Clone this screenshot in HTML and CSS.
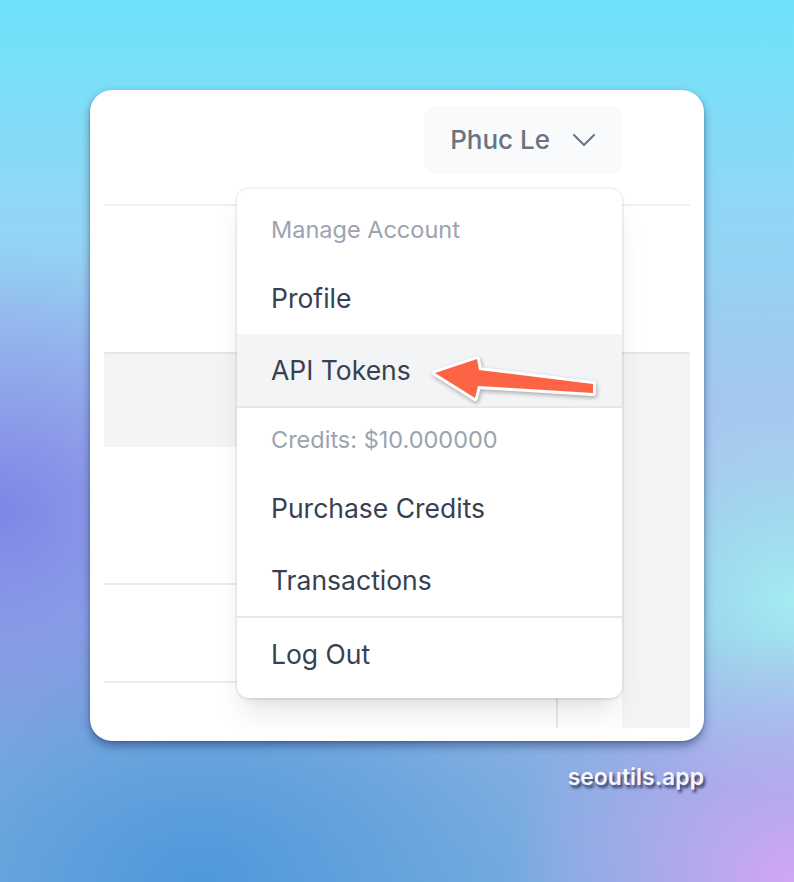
FILE: index.html
```html
<!doctype html>
<html>
 <head>
	<meta charset="UTF-8">
	<title>Account menu</title>
	<link rel="stylesheet" href="styles.css">
 </head>
 <body>
	<div class="stage">
		<div class="window">
			<div class="app">
				<nav class="topbar">
					<button class="user_btn" type="button">
						Phuc Le
						<svg class="chevron" viewBox="0 0 24 24" fill="none" stroke="currentColor" stroke-width="1.5">
							<path stroke-linecap="round" stroke-linejoin="round" d="m19.5 8.25-7.5 7.5-7.5-7.5"/>
						</svg>
					</button>
				</nav>
				<header class="page_head"></header>
				<main class="page_main">
					<div class="table_card">
						<div class="row row_first"></div>
						<div class="row"></div>
						<div class="row_last"><div class="col_line"></div></div>
					</div>
				</main>
			</div>

			<!-- 下拉菜单 -->
			<div class="dropdown">
				<div class="menu_head">Manage Account</div>
				<a class="menu_link">Profile</a>
				<a class="menu_link active">API Tokens</a>
				<div class="menu_sep"></div>
				<div class="menu_head">Credits: $10.000000</div>
				<a class="menu_link">Purchase Credits</a>
				<a class="menu_link">Transactions</a>
				<div class="menu_sep"></div>
				<a class="menu_link">Log Out</a>
			</div>

			<!-- 标注箭头 -->
			<svg class="arrow" viewBox="0 0 185 60" width="185" height="60">
				<polygon points="15,26 57,12 59,23 173,37 173,46 58,39 55,51"
					fill="#fd6446" stroke="#fff" stroke-width="6"
					stroke-linejoin="round" paint-order="stroke"/>
			</svg>
		</div>
		<div class="credit">seoutils.app</div>
	</div>
 </body>
</html>
```

FILE: styles.css
```css
html,body{margin:0;height:100%}
body{
	width:794px;height:882px;overflow:hidden;
	font-family:Inter,"Noto Sans",sans-serif;
	background:
		radial-gradient(ellipse 50% 38% at 0% 58%, #7f86e6 0%, rgba(127,134,230,0) 80%),
		radial-gradient(ellipse 45% 35% at 100% 100%, #d2a6f3 0%, rgba(210,166,243,0) 80%),
		radial-gradient(ellipse 40% 30% at 100% 68%, #a4ecf2 0%, rgba(164,236,242,0) 75%),
		radial-gradient(ellipse 60% 40% at 25% 100%, #4e98da 0%, rgba(78,152,218,0) 80%),
		linear-gradient(180deg,#6de3fa 0%,#8fd8f5 22%,#a8c4ee 50%,#8fb0e4 75%,#7aaee0 100%);
}

.stage{padding:90px 0 0 90px;width:614px}

/* 截图窗口 */
.window{
	position:relative;
	width:586px;height:638px;
	padding:0 14px 13px;
	background:#fff;
	border-radius:22px;
	box-shadow:0 5px 10px rgba(20,40,90,.45),0 1px 3px rgba(0,0,0,.2);
}
.app{height:638px;display:flex;flex-direction:column;overflow:hidden}

.topbar{
	height:98px;
	padding:16px 68px 0 0;
	display:flex;justify-content:flex-end;align-items:flex-start;
	border-bottom:2px solid #f1f2f4;
	flex-shrink:0;
}
.user_btn{
	display:flex;align-items:center;
	padding:16px 24px;
	border:2px solid transparent;
	border-radius:12px;
	background:#f9fafb;
	color:#6b7280;
	font-family:inherit;font-size:26px;font-weight:500;line-height:32px;
}
.chevron{width:32px;height:32px;margin:0 -4px 0 18px}

.page_head{
	height:146px;flex-shrink:0;
	background:#fff;
	box-shadow:0 1px 3px rgba(0,0,0,.1);
	position:relative;z-index:1;
}
.page_main{
	flex:1;
	background:#f3f4f6;
	padding-top:95px;
	display:flex;
}
.table_card{width:518px;background:#fff;display:flex;flex-direction:column}
.row{border-bottom:2px solid #ececef;height:96px}
.row_first{height:136px}
.row_last{flex:1;padding:13px 0 0 452px;display:flex}
.col_line{border-left:2px solid #e5e7eb}

/* 下拉菜单 */
.dropdown{
	position:absolute;left:147px;top:99px;z-index:2;
	width:385px;
	padding:9px 0 8px;
	background:#fff;
	border-radius:12px;
	box-shadow:0 0 0 2px rgba(0,0,0,.05),0 20px 30px -6px rgba(0,0,0,.1),0 8px 12px -8px rgba(0,0,0,.1);
}
.menu_head{
	padding:16px 34px;
	font-size:23.5px;line-height:32px;
	color:#9ca3af;
}
.menu_link{
	display:block;
	padding:16px 34px;
	font-size:26.5px;line-height:40px;
	color:#374151;
}
.menu_link.active{background:#f3f4f6}
.menu_sep{border-top:2px solid #e5e7eb}

.arrow{
	position:absolute;left:330px;top:257px;z-index:3;
	filter:drop-shadow(1px 2px 2px rgba(0,0,0,.3));
}

.credit{
	margin-top:21px;
	text-align:right;
	font-size:23px;line-height:30px;font-weight:600;
	color:#f4f7fc;
	text-shadow:2px 3px 3px rgba(10,20,50,.75);
}
```
